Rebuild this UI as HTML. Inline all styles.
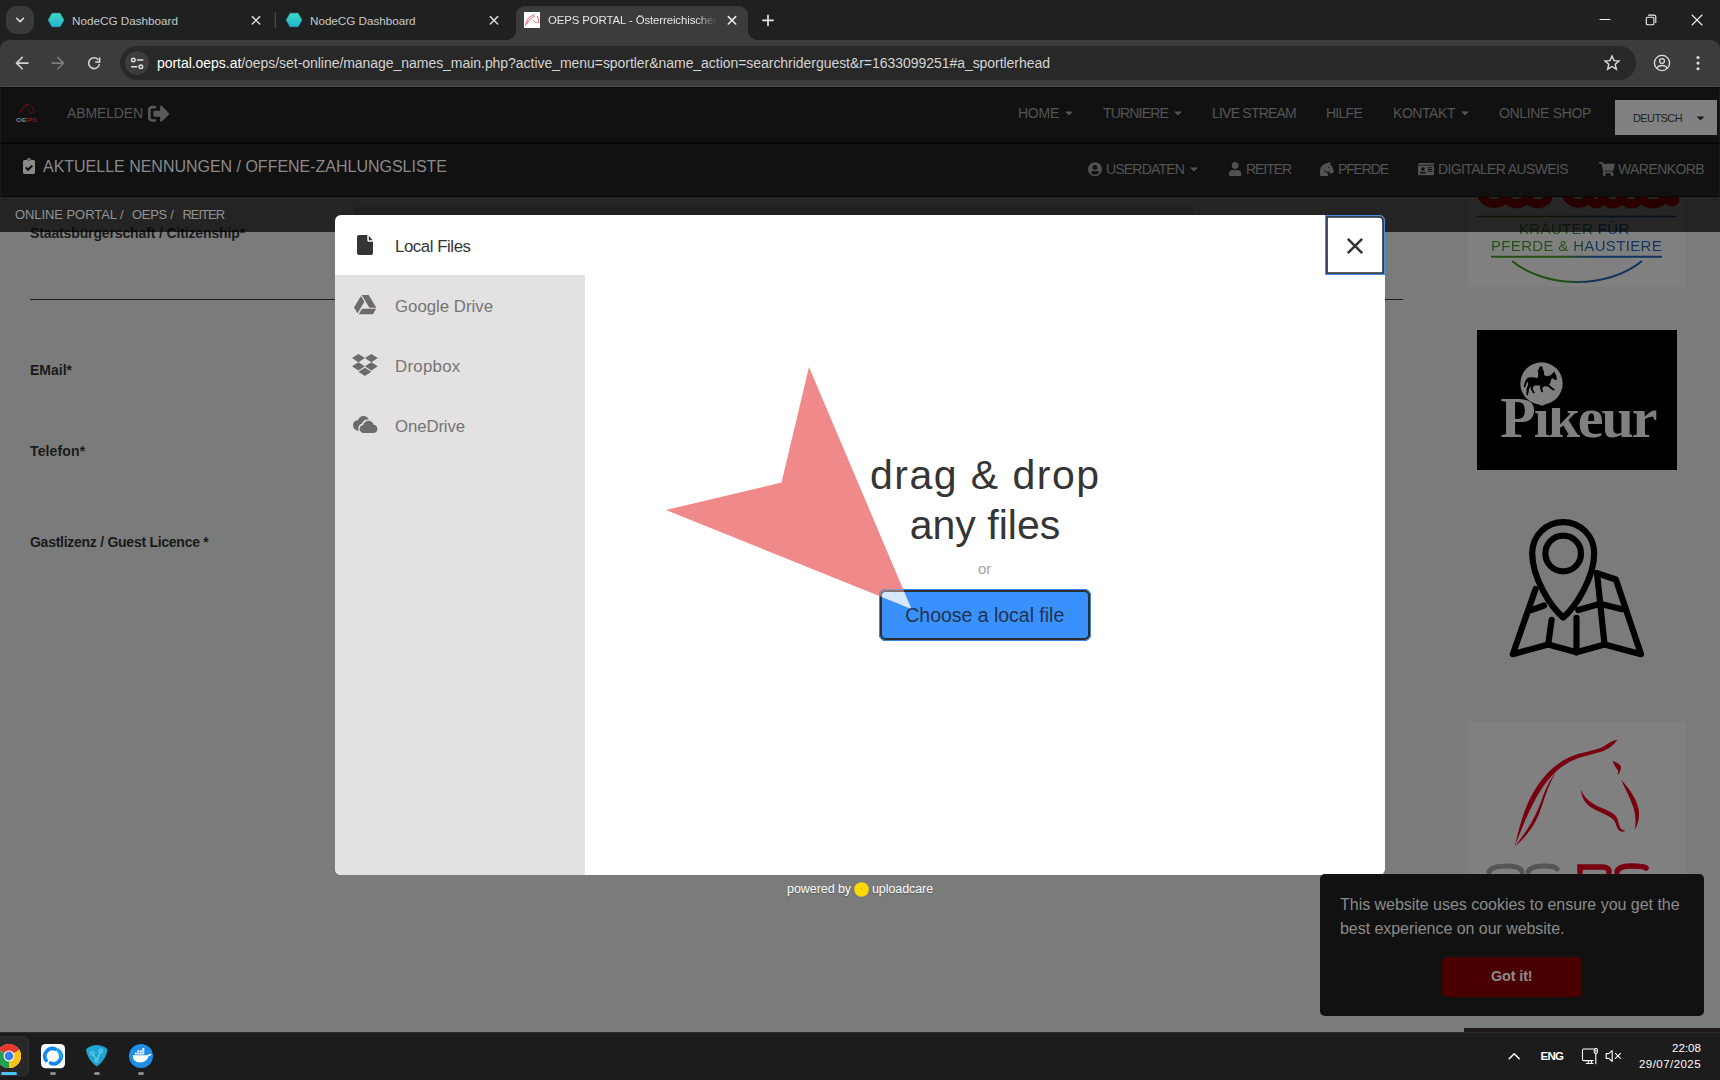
<!DOCTYPE html>
<html lang="de">
<head>
<meta charset="utf-8">
<title>OEPS PORTAL - Österreichischer Pferdesportverband</title>
<style>
*{box-sizing:border-box;margin:0;padding:0}
html,body{width:1720px;height:1080px;overflow:hidden}
body{position:relative;background:#7a7c7b;font-family:"Liberation Sans",sans-serif}
.a{position:absolute}
.t{position:absolute;white-space:nowrap;z-index:5}
svg{position:absolute;overflow:visible}
/* chrome */
#tabstrip{left:0;top:0;width:1720px;height:87px;background:#1f2020;z-index:2}
#toolbar{left:0;top:40px;width:1720px;height:47px;background:#3c3c3c;border-radius:9px 9px 0 0;border-bottom:1px solid #4c4c4c;z-index:2}
#acttab{left:516px;top:6px;width:232px;height:34px;background:#3c3c3c;border-radius:9px 9px 0 0;z-index:3}
#acttab:before,#acttab:after{content:"";position:absolute;bottom:0;width:9px;height:9px}
#acttab:before{left:-9px;background:radial-gradient(circle at 0 0,transparent 8.5px,#3c3c3c 9px)}
#acttab:after{right:-9px;background:radial-gradient(circle at 100% 0,transparent 8.5px,#3c3c3c 9px)}
#tabsearch{left:6px;top:6px;width:28px;height:28px;border-radius:10px;background:#3a3a3a;z-index:3}
#omni{left:120px;top:46px;width:1516px;height:34px;border-radius:17px;background:#282828;z-index:3}
#siteinfo{left:125px;top:51px;width:24px;height:24px;border-radius:12px;background:#3c3c3c;z-index:4}
/* page */
#nav1{left:0;top:87px;width:1720px;height:57px;background:#111;border:1px solid #070707;border-left-color:#1b1b1b;border-right-color:#1b1b1b;border-bottom-width:2px;z-index:2}
#nav2{left:0;top:144px;width:1720px;height:53px;background:#111;border:1px solid #070707;border-left-color:#1b1b1b;border-right-color:#1b1b1b;border-top:0;z-index:2}
#crumb{left:0;top:197px;width:1720px;height:35px;background:rgba(0,0,0,.705);z-index:4}
#crumbin{left:353px;top:207px;width:840px;height:12px;background:#1f1f1f;border-radius:4px 4px 0 0;z-index:4}
#lang{left:1615px;top:100px;width:102px;height:35px;background:#818181;z-index:3}
#hr{left:30px;top:299px;width:1373px;height:1px;background:#1c1c1c}
/* modal */
#modal{left:335px;top:215px;width:1050px;height:660px;background:#fff;border-radius:6px;z-index:20;overflow:hidden}
#side{left:0;top:60px;width:250px;height:600px;background:#e3e1e1}
#close{left:990px;top:0;width:60px;height:60px;border-radius:0 6px 0 0;box-shadow:inset 0 0 0 1.200px #4a8fe6,inset 0 0 0 2.800px #2b2b2b}
#btn{left:879px;top:589px;width:212px;height:52px;border-radius:7px;background:#3a90fc;box-shadow:inset 0 0 0 1px #3a86e8,inset 0 0 0 3px #2d2d2d;z-index:31}
/* cookie */
#cookie{left:1320px;top:874px;width:384px;height:142px;border-radius:5px;background:#111;z-index:38}
#gotit{left:1442px;top:957px;width:140px;height:40px;border-radius:5px;background:#4b0000;z-index:39}
/* taskbar */
#taskbar{left:0;top:1032px;width:1720px;height:48px;background:#1c1c1c;border-top:1px solid #2b2b2b;z-index:50}
</style>
</head>
<body>
<!-- ============ browser chrome ============ -->
<div class="a" id="tabstrip"></div>
<div class="a" id="toolbar"></div>
<div class="a" id="acttab"></div>
<div class="a" id="tabsearch"></div>
<div class="a" id="omni"></div>
<div class="a" id="siteinfo"></div>
<svg id="chromeicons" style="left:0;top:0;z-index:6" width="1720" height="90" viewBox="0 0 1720 90" fill="none" stroke-linecap="round" stroke-linejoin="round">
  <defs>
    <linearGradient id="hexg" x1="0" y1="0" x2="0" y2="1"><stop offset="0" stop-color="#40d8c2"/><stop offset="1" stop-color="#22b4d2"/></linearGradient>
  </defs>
  <!-- tab search chevron -->
  <path d="M16.700 18.300l3.400 3.400 3.400-3.400" stroke="#e3e3e3" stroke-width="1.6"/>
  <!-- hex favicons -->
  <path d="M48.2 20l3.9-6.8h8l3.9 6.8-3.9 6.8h-8z" fill="url(#hexg)" stroke="url(#hexg)" stroke-width=".4"/>
  <path d="M286.2 20l3.9-6.8h8l3.9 6.8-3.9 6.8h-8z" fill="url(#hexg)" stroke="url(#hexg)" stroke-width=".4"/>
  <!-- tab close x -->
  <g stroke="#d6d6d6" stroke-width="1.5">
    <path d="M252.3 16.6l7.4 7.4M259.7 16.6l-7.4 7.4"/>
    <path d="M490.3 16.6l7.4 7.4M497.7 16.6l-7.4 7.4"/>
    <path d="M728.3 16.6l7.4 7.4M735.7 16.6l-7.4 7.4" stroke="#ededed"/>
  </g>
  <path d="M275.3 12.5v15" stroke="#4d4d4d" stroke-width="1.2"/>
  <!-- favicon 3 -->
  <rect x="524" y="12" width="16" height="16" fill="#fff" stroke="none"/>
  <path d="M525.5 25.5c.8-5.5 3.6-9.6 9-10.8M527 24c1.5-4 4-6.5 7.5-7.5M537.5 16.5c.8 2 1.3 4 1.2 6.3M533.5 20.5c1 1.6 2.4 2.3 3.6 2.2" stroke="#e9626a" stroke-width="1"/>
  <!-- new tab + -->
  <path d="M763 20.3h10M768 15.3v10" stroke="#e6e6e6" stroke-width="1.7"/>
  <!-- window controls -->
  <path d="M1600 19.5h10" stroke="#f0f0f0" stroke-width="1.1"/>
  <rect x="1646.3" y="17.2" width="7.6" height="7.6" rx="1.3" stroke="#f0f0f0" stroke-width="1.1"/>
  <path d="M1648.5 15.100h5.300a2 2 0 0 1 2 2v5.300" stroke="#f0f0f0" stroke-width="1.1"/>
  <path d="M1692 15l10 10M1702 15l-10 10" stroke="#f0f0f0" stroke-width="1.1"/>
  <!-- back / forward / reload -->
  <path d="M28 63.100H17M22.200 57.400l-5.700 5.700 5.700 5.700" stroke="#d2d2d2" stroke-width="1.6"/>
  <path d="M52.200 63.100H63M57.800 57.400l5.700 5.700-5.700 5.700" stroke="#7c7c7c" stroke-width="1.6"/>
  <path d="M98 59.500A5.400 5.400 0 1 0 99.300 64.600" stroke="#d2d2d2" stroke-width="1.6"/>
  <path d="M99.600 57.400v4.700h-4.400" stroke="#dedede" stroke-width="1.5" stroke-linecap="butt" stroke-linejoin="miter"/>
  <!-- site info (tune) -->
  <g stroke="#e0e0e0" stroke-width="1.4">
    <circle cx="133.3" cy="60" r="1.8"/><path d="M137.5 60h5.3"/>
    <circle cx="140.9" cy="66.8" r="1.8"/><path d="M131.5 66.8h5.3"/>
  </g>
  <!-- star -->
  <path d="M1612 56l2 4.6 5 .4-3.8 3.3 1.2 4.9-4.4-2.7-4.4 2.7 1.2-4.9-3.8-3.3 5-.4z" stroke="#dcdcdc" stroke-width="1.4" stroke-linejoin="miter"/>
  <!-- profile -->
  <circle cx="1662" cy="63" r="7.6" stroke="#dcdcdc" stroke-width="1.4"/>
  <circle cx="1662" cy="61" r="2.4" stroke="#dcdcdc" stroke-width="1.3"/>
  <path d="M1656.7 68.3c1.2-2 3-2.8 5.3-2.8s4.1.8 5.3 2.8" stroke="#dcdcdc" stroke-width="1.3"/>
  <!-- kebab -->
  <g fill="#dcdcdc" stroke="none"><circle cx="1698" cy="57.5" r="1.55"/><circle cx="1698" cy="63.1" r="1.55"/><circle cx="1698" cy="68.7" r="1.55"/></g>
</svg>

<!-- ============ page (dimmed behind dialog overlay) ============ -->
<div class="a" id="nav1"></div>
<div class="a" id="nav2"></div>
<div class="a" id="lang"></div>
<div class="a" id="hr"></div>
<!-- page header icons -->
<svg style="left:16px;top:102px;z-index:5" width="22" height="22" viewBox="0 0 22 22" fill="none" stroke-linecap="round">
  <path d="M3.6 11.6c.8-5.200 4-8.600 9.800-10M5.600 9.600c1.400-3.200 3.600-5.400 7-6.600M15.400 3.400c1.600 2.400 2.600 5 2.600 8M11 7.600c1 2 2.800 3.200 5 3.400" stroke="#5c1014" stroke-width="1"/>
  <text x="0" y="20.300" font-family="'Liberation Sans',sans-serif" font-size="5.600" font-weight="700" fill="#7e7e7e" stroke="none" textLength="21" lengthAdjust="spacingAndGlyphs">OE<tspan fill="#7a1c20">PS</tspan></text>
</svg>
<svg style="left:148px;top:102.500px;z-index:5" width="21.500" height="21.500" viewBox="0 0 512 512"><path fill="#595959" d="M497 273L329 441c-15 15-41 4.500-41-17v-96H152c-13.300 0-24-10.700-24-24v-96c0-13.300 10.700-24 24-24h136V88c0-21.400 25.900-32 41-17l168 168c9.300 9.400 9.300 24.600 0 34zM192 436v-40c0-6.600-5.400-12-12-12H96c-17.700 0-32-14.300-32-32V160c0-17.700 14.300-32 32-32h84c6.600 0 12-5.400 12-12V76c0-6.600-5.400-12-12-12H96c-53 0-96 43-96 96v192c0 53 43 96 96 96h84c6.600 0 12-5.400 12-12z"/></svg>
<svg style="left:23px;top:158px;z-index:5" width="12" height="16" viewBox="0 0 384 512"><path fill="#8a8a8a" d="M336 64h-80c0-35.300-28.700-64-64-64s-64 28.700-64 64H48C21.500 64 0 85.500 0 112v352c0 26.500 21.500 48 48 48h288c26.500 0 48-21.500 48-48V112c0-26.500-21.500-48-48-48zM192 40c13.300 0 24 10.700 24 24s-10.700 24-24 24-24-10.700-24-24 10.700-24 24-24zm121.200 231.800l-143 141.800c-4.700 4.700-12.300 4.600-17-.1l-82.600-83.300c-4.700-4.700-4.600-12.300.1-17L99.100 285c4.700-4.700 12.300-4.600 17 .1l46 46.400 106-105.200c4.700-4.700 12.300-4.600 17 .1l28.200 28.400c4.700 4.800 4.600 12.300-.1 17z"/></svg>
<!-- carets -->
<svg style="left:0;top:0;z-index:5" width="1720" height="200" viewBox="0 0 1720 200">
  <g fill="#545454">
    <path d="M1065 111.500h8l-4 4z"/>
    <path d="M1174 111.500h8l-4 4z"/>
    <path d="M1461 111.500h8l-4 4z"/>
    <path d="M1190 167.500h8l-4 4z"/>
  </g>
  <path d="M1696.500 116.500h8l-4 4z" fill="#1a1a1a"/>
</svg>
<!-- user-circle -->
<svg style="left:1088px;top:161.700px;z-index:5" width="14" height="14.400" viewBox="0 0 496 512"><path fill="#525252" d="M248 8C111 8 0 119 0 256s111 248 248 248 248-111 248-248S385 8 248 8zm0 96c48.600 0 88 39.400 88 88s-39.400 88-88 88-88-39.400-88-88 39.400-88 88-88zm0 344c-58.700 0-111.300-26.600-146.500-68.200 18.800-35.400 55.600-59.800 98.500-59.800 2.400 0 4.800.4 7.100 1.100 13 4.200 26.600 6.900 40.900 6.900 14.300 0 28-2.700 40.900-6.900 2.300-.7 4.700-1.100 7.100-1.100 42.900 0 79.700 24.400 98.500 59.800C359.300 421.400 306.700 448 248 448z"/></svg>
<!-- user -->
<svg style="left:1228.700px;top:162px;z-index:5" width="12.300" height="14" viewBox="0 0 448 512"><path fill="#525252" d="M224 256c70.700 0 128-57.300 128-128S294.700 0 224 0 96 57.300 96 128s57.300 128 128 128zm89.600 32h-16.700c-22.200 10.200-46.900 16-72.900 16s-50.600-5.800-72.900-16h-16.700C60.200 288 0 348.200 0 422.400V464c0 26.500 21.500 48 48 48h352c26.500 0 48-21.500 48-48v-41.600c0-74.200-60.200-134.400-134.400-134.400z"/></svg>
<!-- horse head -->
<svg style="left:1320px;top:162px;z-index:5" width="14" height="14" viewBox="0 0 512 512"><path fill="#525252" d="M509.800 332.500l-69.900-164.300c-14.900-41.200-50.400-71-93-79.200 18-10.600 46.300-35.900 34.200-82.300-1.300-5-7.100-7.900-12-6.100L166.900 76.300C35.900 123.400 0 238.900 0 398.800V480c0 17.700 14.300 32 32 32h236.200c23.800 0 39.300-25 28.600-46.300L256 384v-.7c-45.600-3.500-84.600-30.700-104.300-69.600-1.600-3.100-.9-6.900 1.600-9.300l12.100-12.100c3.900-3.900 10.600-2.700 12.900 2.400 14.800 33.700 48.200 57.400 87.400 57.400 17.200 0 33-5.100 46.800-13.200l46 63.900c6 8.400 15.700 13.300 26 13.300h50.300c8.500 0 16.600-3.400 22.600-9.400l45.300-39.800c8.900-9.100 11.700-22.600 7.100-34.400zM328 224c-13.300 0-24-10.700-24-24s10.700-24 24-24 24 10.700 24 24-10.700 24-24 24z"/></svg>
<!-- id card -->
<svg style="left:1418px;top:161.500px;z-index:5" width="16" height="14.200" viewBox="0 0 576 512"><path fill="#525252" d="M528 32H48C21.500 32 0 53.500 0 80v16h576V80c0-26.500-21.500-48-48-48zM0 432c0 26.500 21.500 48 48 48h480c26.500 0 48-21.500 48-48V128H0v304zm352-232c0-4.400 3.600-8 8-8h144c4.400 0 8 3.600 8 8v16c0 4.400-3.600 8-8 8H360c-4.400 0-8-3.600-8-8v-16zm0 64c0-4.400 3.600-8 8-8h144c4.400 0 8 3.600 8 8v16c0 4.400-3.600 8-8 8H360c-4.400 0-8-3.600-8-8v-16zm0 64c0-4.400 3.600-8 8-8h144c4.400 0 8 3.600 8 8v16c0 4.400-3.600 8-8 8H360c-4.400 0-8-3.600-8-8v-16zM176 192c35.300 0 64 28.700 64 64s-28.700 64-64 64-64-28.700-64-64 28.700-64 64-64zM67.100 396.200C75.500 370.500 99.600 352 128 352h8.200c12.300 5.100 25.700 8 39.800 8s27.600-2.900 39.800-8h8.200c28.400 0 52.500 18.500 60.900 44.200 3.200 9.900-5.200 19.800-15.600 19.800H82.700c-10.400 0-18.800-10-15.600-19.800z"/></svg>
<!-- cart -->
<svg style="left:1599px;top:162px;z-index:5" width="15.700" height="14" viewBox="0 0 576 512"><path fill="#525252" d="M528.100 301.300l47.300-208C578.800 78.300 567.400 64 552 64H159.200l-9.200-44.800C147.800 8 137.900 0 126.500 0H24C10.700 0 0 10.700 0 24v16c0 13.300 10.700 24 24 24h69.900l70.200 343.400C147.300 417.100 136 435.200 136 456c0 30.900 25.100 56 56 56s56-25.100 56-56c0-15.700-6.400-29.800-16.800-40h209.600C430.400 426.200 424 440.300 424 456c0 30.900 25.100 56 56 56s56-25.100 56-56c0-22.200-12.900-41.300-31.600-50.400l5.500-24.300c3.400-15-8-29.300-23.400-29.300H218.100l-6.500-32h293.100c11.200 0 20.900-7.800 23.400-18.700z"/></svg>

<!-- right column sponsor tiles (dimmed) -->
<div class="a" style="left:1449px;top:314px;width:256px;height:1px;background:#7f8180"></div>
<div class="a" style="left:1449px;top:497px;width:256px;height:1px;background:#7f8180"></div>
<div class="a" style="left:1449px;top:690px;width:256px;height:1px;background:#7f8180"></div>
<div class="a" style="left:1468px;top:196px;width:217px;height:91px;background:#808080"></div>
<svg style="left:0;top:0;z-index:1" width="1720" height="1080" viewBox="0 0 1720 1080" fill="none">
  <defs>
    <linearGradient id="gb" gradientUnits="userSpaceOnUse" x1="1491" x2="1662" y1="0" y2="0"><stop offset="0" stop-color="#235012"/><stop offset=".42" stop-color="#235012"/><stop offset=".6" stop-color="#10345e"/><stop offset="1" stop-color="#10345e"/></linearGradient>
  </defs>
  <!-- curatia script (only the lower loops are visible below the header) -->
  <g stroke="#8a0000" stroke-width="9" stroke-linecap="round" stroke-linejoin="round">
    <path d="M1481 191C1481 207 1506 207 1506 194C1506 207 1527 207 1527 194C1527 207 1548.5 207 1548.5 194"/>
    <path d="M1566 191C1566 207 1589 207 1589 194C1589 207 1603 207 1603 194C1603 207 1622 207 1622 194C1622 207 1641 207 1641 194C1641 207 1665 207 1665 194Q1670 206 1675 200"/>
  </g>
  <path d="M1477 216.500h199" stroke="url(#gb)" stroke-width="1.600"/>
  <path d="M1491 256.800h171" stroke="url(#gb)" stroke-width="1.900"/>
  <path d="M1512 261c34 28 96 28 130 0" stroke="url(#gb)" stroke-width="2"/>
  <!-- pikeur -->
  <rect x="1477" y="330" width="200" height="140" fill="#000"/>
  <!-- map icon -->
  <g stroke="#000" stroke-width="6.200" stroke-linecap="round" stroke-linejoin="round">
    <path d="M1563.200 617.500c-12-10-31-39-31-64.400a31 31 0 0 1 62 0c0 25.400-19 54.400-31 64.400z"/>
    <circle cx="1563.200" cy="553.500" r="17.800"/>
    <path d="M1535.600 589l-22.800 65.200 35.400-9.800 28.300 7.900 28-7.900 36.500 9.800-25.100-74.700-18.900-6.300"/>
    <path d="M1548.200 644.400l3.400-24.500M1576.500 652.300v-34.500M1604.500 644.400l-7.500-71.200"/>
    <path d="M1531.300 610.100l12.700-4.600M1578.300 610.100l21.800-6.300 22 5.500"/>
  </g>
  <!-- oeps horse -->
  <rect x="1468.500" y="722" width="216.500" height="200" fill="#808080"/>
  <g fill="#780010">
    <path d="M1617.500 739.800c-6.500 1-11.500 5.500-17 8.300-8 3.200-20 4.200-31 9.200-25 11-40 38-47 60-3.500 10.500-5.500 20-7.800 29 4.500-11 9.300-24 14.300-34 9-19 20-39 40-50 11-6 23-7.500 32-10.500 7.500-2.500 13-7 16.500-12z"/>
    <path d="M1556 772.500c-7 8-11 18-14.500 28-4 11-9 21-15 30-4 6-8 11-11.500 16 8-7 15-15 20-24 6-11 8.500-23 13-34 2-5.500 5-11 8-16z"/>
    <path d="M1612.600 760.500c1 4 3 7 5.500 10l-.3 4.500c2-2.500 3.500-5.500 3-8.500-1-3-5-4-8.200-6z"/>
    <path d="M1621 779.500c4 9 9 18 12 27 2.500 7.500 3.500 15.500 1.500 23.500 4-6 5.500-14 4-21.500-2.500-11-10-20.500-17.500-29z"/>
    <path d="M1581.200 790c0 7 4 13.500 10 17.500 7 4.500 16 6.500 22 12 3 3 3 8 6 11 2 1.500 4.500 1.500 6.500 0-3 0-5-1.500-6-4-1.500-4-1.500-8.500-5-11.500-6.500-5.500-15.500-7-22.500-12-5-3-9-7.500-11-13z"/>
  </g>
  <g stroke-linecap="round" stroke-width="5" fill="none">
    <path d="M1489 872c2-5 10-6 18-6s14 1 15 6M1528 872c2-5 9-6 16-6s12 1 13 3" stroke="#555"/>
    <path d="M1580 872v-5h22c5 0 7 2 7 5M1617 872c1-5 8-6 14-6s13 0 15 2" stroke="#780010" stroke-width="5.500"/>
  </g>
  <!-- photo strip at very bottom -->
  <rect x="1464" y="1028" width="256" height="4" fill="#1d1716"/>
</svg>
<div class="a" style="left:1549px;top:392px;width:20px;height:15.500px;background:#000;z-index:6"></div>
<svg style="left:1519.700px;top:362px;z-index:7" width="43" height="43" viewBox="0 0 43 43"><circle cx="21.500" cy="21.500" r="21.200" fill="#808080"/>
  <path fill="#000" d="M21.300 4.300c.9 0 1.500.7 1.400 1.600l-.2 1.300c.9.500 1.300 1.500 1.400 2.600l.3 3.200 2.200 1.200 3.800-.6 3.700-3.500c.4-.4.900-.3 1 .2l.3 1.500c.7.800 1.200 1.700 1.300 2.800l.3 2.400c0 .6-.5 1.100-1.100 1l-1.600-.4-1.100-1.300-1.700.6-.9 3.700c-.2.900-.7 1.700-1.400 2.200l5.600 4.700c.5.400.2 1.100-.4 1l-1.300-.2-5.700-4-2.500-.1-2.600 1.900.9 3.400c.1.500-.2.900-.7.800l-.9-.2-1.500-4.100.6-2.300-4.900-.4-2.600 1.700-.1 2.600 1.800 2.900c.3.500-.1 1-.6.800l-1.100-.4-2.300-3.800.1-2.800-1.700 2.400-1.100 6.200c-.1.500-.6.700-1 .4l-.6-.4.300-6.600 1.500-3.800-.2-3.100-1.200 1.300-1.600 4.400c-.2.600-.9.600-1.100.1l-.3-.9 1.300-4.700c.6-1.900 1.900-3.400 3.700-4 1.700-.6 3.500-.5 5.200 0l3.700.5.600-4.500-.5-2.300c-.2-.8.200-1.500.9-1.900l.4-1.500c.2-.8.900-1.300 1.600-1.300z"/>
</svg>

<div class="a" id="crumb"></div>
<div class="a" id="crumbin"></div>

<!-- ============ uploadcare dialog ============ -->
<div class="a" id="modal">
  <div class="a" id="side"></div>
  <div class="a" id="close"></div>
</div>
<!-- source tab icons -->
<svg style="left:357px;top:235px;z-index:30" width="16" height="20" viewBox="0 0 16 20"><path fill="#353535" d="M2 0h8.300v5.300a1.500 1.500 0 0 0 1.500 1.500H16V18a2 2 0 0 1-2 2H2a2 2 0 0 1-2-2V2a2 2 0 0 1 2-2zM11.800.700L15.700 5.300h-3.900z"/></svg>
<svg style="left:353.800px;top:294.800px;z-index:30" width="22.400" height="19.200" viewBox="0 0 22.400 19.200"><g fill="#6b6b6b"><path d="M7.700 0h7l7.700 12.800h-7z"/><path d="M6.900.9l3.500 5.800L3.500 18.300 0 12.500z"/><path d="M8 13.800h14.200l-3.300 5.400H4.700z"/></g></svg>
<svg style="left:352.200px;top:353.500px;z-index:30" width="25.800" height="22" viewBox="0 0 25.800 22"><g fill="#6b6b6b"><path d="M6.450 0l6.450 4.100-6.450 4.100L0 4.100z"/><path d="M19.350 0l6.450 4.100-6.450 4.100-6.450-4.100z"/><path d="M6.450 8.200l6.450 4.100-6.450 4.100L0 12.300z"/><path d="M19.350 8.200l6.450 4.100-6.450 4.100-6.450-4.100z"/><path d="M12.900 13.700l6.450 4.100L12.900 22l-6.450-4.200z"/></g></svg>
<svg style="left:352.800px;top:416px;z-index:30" width="24.400" height="17" viewBox="0 0 24.400 17"><g fill="#6b6b6b"><path d="M5.300 12.200c0-2.300 1.500-4.100 3.600-4.500.6-2.600 2.800-4.300 5.400-4.300.5 0 1 .1 1.400.2C14.900 1.400 12.900 0 10.500 0 8 0 5.900 1.600 5.200 3.900 2.300 4 0 6.400 0 9.300c0 2.800 2.100 5.100 4.900 5.400h.9c-.3-.8-.5-1.600-.5-2.500z"/><path d="M10.600 17c-2.200 0-4-1.800-4-4 0-2.100 1.600-3.800 3.600-4 .5-2.500 2.700-4.300 5.300-4.300 2.500 0 4.700 1.700 5.200 4.100 2.100.2 3.700 2 3.700 4.100 0 2.300-1.800 4.100-4.100 4.100z"/></g></svg>
<!-- close X -->
<svg style="left:1347px;top:238px;z-index:30" width="16" height="16" viewBox="0 0 16 16"><path d="M.8.800l14.400 14.400M15.200.8L.8 15.200" stroke="#353535" stroke-width="2.600" stroke-linecap="butt"/></svg>
<!-- uploadcare dot -->
<svg style="left:854.400px;top:882.100px;z-index:30" width="15" height="15" viewBox="0 0 15 15"><circle cx="7.500" cy="7.500" r="7.300" fill="#ffd800"/><path d="M6.800 7h1.200" stroke="#b89400" stroke-width=".7"/></svg>
<!-- annotation arrow (under button) -->
<svg style="left:0;top:0;z-index:30" width="1720" height="1080" viewBox="0 0 1720 1080"><path d="M809 367L911.500 609 666 510l115.500-27.500z" fill="#f08a8a"/></svg>

<div class="a" id="btn"></div>
<!-- arrow tip where it overlaps the button -->
<svg style="left:879px;top:589px;z-index:33" width="212" height="52" viewBox="879 589 212 52"><defs><clipPath id="btnclip"><rect x="879" y="589" width="212" height="52" rx="7"/></clipPath><clipPath id="btnin"><rect x="882" y="592" width="206" height="46" rx="4"/></clipPath></defs><g clip-path="url(#btnclip)"><path d="M809 367L911.500 609 666 510l115.500-27.500z" fill="#d9a6aa" opacity=".55"/></g><g clip-path="url(#btnin)"><path d="M809 367L911.500 609 666 510l115.500-27.500z" fill="#d6e8fd"/></g></svg>


<!-- ============ cookie consent ============ -->
<div class="a" id="cookie"></div>
<div class="a" id="gotit"></div>

<!-- ============ windows taskbar ============ -->
<div class="a" id="taskbar"></div>
<!-- taskbar app icons -->
<div class="a" style="left:-6px;top:1036px;width:35px;height:40px;border-radius:5px;background:#282828;border:1px solid #303030;z-index:51"></div>
<svg style="left:0;top:1032px;z-index:52" width="1720" height="48" viewBox="0 1032 1720 48">
  <!-- chrome -->
  <g>
    <circle cx="9" cy="1056" r="12" fill="#fff"/>
    <path d="M9 1056L-1.390 1050A12 12 0 0 1 19.390 1050z" fill="#e33b2e"/>
    <path d="M9 1056L19.390 1050A12 12 0 0 1 9 1068z" fill="#fbc116"/>
    <path d="M9 1056L9 1068A12 12 0 0 1 -1.390 1050z" fill="#22a04b"/>
    <path d="M-1.390 1050A12 12 0 0 1 19.390 1050L9 1050z" fill="#e33b2e"/>
    <path d="M19.390 1050A12 12 0 0 1 9 1068L14.200 1059z" fill="#fbc116"/>
    <path d="M9 1068A12 12 0 0 1 -1.390 1050L3.800 1059z" fill="#22a04b"/>
    <circle cx="9" cy="1056" r="5.500" fill="#fff"/>
    <circle cx="9" cy="1056" r="4.400" fill="#3b7ded"/>
  </g>
  <rect x="1" y="1072" width="16" height="3" rx="1.500" fill="#4cc2ff"/>
  <!-- app 2: white tile with blue ring -->
  <rect x="41" y="1044" width="24" height="24.300" rx="4.500" fill="#fbfbfb"/>
  <g fill="none" stroke-linecap="round" stroke-width="3.600">
    <path d="M46.200 1060.500a7.600 7.600 0 0 1 9.300-11.300" stroke="#0f86f2"/>
    <path d="M59.800 1051.700a7.600 7.600 0 0 1-9.300 11.300" stroke="#0f86f2"/>
    <path d="M58.200 1050.200a7.600 7.600 0 0 1 2.300 6" stroke="#22a7e6"/>
  </g>
  <rect x="50" y="1072" width="6" height="3" rx="1.500" fill="#8a8a8a"/>
  <!-- app 3: shield -->
  <path d="M86 1049.300c7-5.600 14.500-5.600 21.500 0-1 7.300-4.700 13-10.750 17.300C90.700 1062.300 87 1056.600 86 1049.300z" fill="#1fa5d3"/>
  <g fill="none" stroke="#8fd6ee" stroke-width="1">
    <circle cx="92.300" cy="1053.300" r="1.700"/><circle cx="100.800" cy="1050.800" r="1.700"/><circle cx="96.700" cy="1060.500" r="1.400"/>
    <path d="M93.300 1054.800l3 4.400M100.200 1052.400l-3 6.800"/>
  </g>
  <rect x="94" y="1072" width="6" height="3" rx="1.500" fill="#8a8a8a"/>
  <!-- app 4: docker -->
  <circle cx="141" cy="1056" r="12" fill="#1d8fe8"/>
  <path d="M132.700 1055.300h13.600c1.300 0 2.300-.5 3-1.500.6.300 1.500.3 2.300-.1-.5 1.500-1.500 2.200-2.900 2.300-1.300 4.100-4.300 6.400-8.800 6.400-4.600 0-7-2.500-7.200-7.100z" fill="#fff"/>
  <g fill="#fff"><rect x="134.800" y="1052.600" width="2" height="1.900"/><rect x="137.300" y="1052.600" width="2" height="1.900"/><rect x="139.800" y="1052.600" width="2" height="1.900"/><rect x="142.300" y="1052.600" width="2" height="1.900"/><rect x="137.300" y="1050.300" width="2" height="1.900"/><rect x="139.800" y="1050.300" width="2" height="1.900"/><rect x="142.300" y="1050.300" width="2" height="1.900"/><rect x="142.300" y="1048" width="2" height="1.900"/></g>
  <rect x="138" y="1072" width="6" height="3" rx="1.500" fill="#8a8a8a"/>
  <!-- tray -->
  <path d="M1509.200 1058.800l5-5 5 5" fill="none" stroke="#fff" stroke-width="1.500" stroke-linecap="round" stroke-linejoin="round"/>
  <g fill="none" stroke="#fff" stroke-width="1.100" stroke-linejoin="round" stroke-linecap="round">
    <path d="M1593.500 1049h-9.800a1.200 1.200 0 0 0-1.200 1.200v9.200a1.200 1.200 0 0 0 1.200 1.200h9.500"/>
    <path d="M1586.300 1063.500h6.800M1588.300 1060.800v2.500M1591.300 1060.800v2.500"/>
    <rect x="1594.300" y="1048.600" width="3" height="4.600" rx="1"/>
    <path d="M1595.800 1053.300v10.500M1595.800 1050.200v1"/>
    <path d="M1606.200 1053.600h2.600l3.400-3v10.800l-3.400-3h-2.600z"/>
    <path d="M1615.400 1053.400l5 5M1620.400 1053.400l-5 5"/>
  </g>
</svg>


<!-- ============ all text ============ -->
<span class="t" style="left:72.0px;top:13.93px;font:400 11.7px/1.2 'Liberation Sans', sans-serif;letter-spacing:0.006px;color:#c9c9c9;">NodeCG Dashboard</span>
<span class="t" style="left:310.0px;top:13.93px;font:400 11.7px/1.2 'Liberation Sans', sans-serif;letter-spacing:-0.025px;color:#c9c9c9;">NodeCG Dashboard</span>
<span class="t" style="left:548.0px;top:14.21px;font:400 11.4px/1.2 'Liberation Sans', sans-serif;letter-spacing:-0.099px;color:#e6e6e6;width:169px;overflow:hidden;-webkit-mask-image:linear-gradient(90deg,#000 0,#000 148px,transparent 169px);mask-image:linear-gradient(90deg,#000 0,#000 148px,transparent 169px);">OEPS PORTAL - Österreichischer</span>
<span class="t" style="left:67.0px;top:104.75px;font:400 14px/1.2 'Liberation Sans', sans-serif;letter-spacing:-0.129px;color:#555;">ABMELDEN</span>
<span class="t" style="left:43.0px;top:156.86px;font:400 16px/1.2 'Liberation Sans', sans-serif;letter-spacing:-0.013px;color:#8a8a8a;">AKTUELLE NENNUNGEN / OFFENE-ZAHLUNGSLISTE</span>
<span class="t" style="left:1018.0px;top:104.75px;font:400 14px/1.2 'Liberation Sans', sans-serif;letter-spacing:-0.250px;color:#545454;">HOME</span>
<span class="t" style="left:1103.0px;top:104.75px;font:400 14px/1.2 'Liberation Sans', sans-serif;letter-spacing:-0.820px;color:#545454;">TURNIERE</span>
<span class="t" style="left:1212.0px;top:104.75px;font:400 14px/1.2 'Liberation Sans', sans-serif;letter-spacing:-0.781px;color:#545454;">LIVE STREAM</span>
<span class="t" style="left:1326.0px;top:104.75px;font:400 14px/1.2 'Liberation Sans', sans-serif;letter-spacing:-0.738px;color:#545454;">HILFE</span>
<span class="t" style="left:1393.0px;top:104.75px;font:400 14px/1.2 'Liberation Sans', sans-serif;letter-spacing:-0.440px;color:#545454;">KONTAKT</span>
<span class="t" style="left:1499.0px;top:104.75px;font:400 14px/1.2 'Liberation Sans', sans-serif;letter-spacing:-0.337px;color:#545454;">ONLINE SHOP</span>
<span class="t" style="left:1633.0px;top:111.59px;font:400 11px/1.2 'Liberation Sans', sans-serif;letter-spacing:-0.596px;color:#1f1f1f;">DEUTSCH</span>
<span class="t" style="left:1106.0px;top:160.75px;font:400 14px/1.2 'Liberation Sans', sans-serif;letter-spacing:-0.812px;color:#545454;">USERDATEN</span>
<span class="t" style="left:1246.0px;top:160.75px;font:400 14px/1.2 'Liberation Sans', sans-serif;letter-spacing:-1.057px;color:#545454;">REITER</span>
<span class="t" style="left:1338.0px;top:160.75px;font:400 14px/1.2 'Liberation Sans', sans-serif;letter-spacing:-1.133px;color:#545454;">PFERDE</span>
<span class="t" style="left:1438.0px;top:160.75px;font:400 14px/1.2 'Liberation Sans', sans-serif;letter-spacing:-0.620px;color:#545454;">DIGITALER AUSWEIS</span>
<span class="t" style="left:1618.0px;top:160.75px;font:400 14px/1.2 'Liberation Sans', sans-serif;letter-spacing:-0.587px;color:#545454;">WARENKORB</span>
<span class="t" style="left:15.0px;top:206.70px;font:400 13px/1.2 'Liberation Sans', sans-serif;letter-spacing:-0.072px;color:#939393;">ONLINE PORTAL /</span>
<span class="t" style="left:132.0px;top:206.70px;font:400 13px/1.2 'Liberation Sans', sans-serif;letter-spacing:-0.310px;color:#939393;">OEPS /</span>
<span class="t" style="left:182.5px;top:206.70px;font:400 13px/1.2 'Liberation Sans', sans-serif;letter-spacing:-1.029px;color:#939393;">REITER</span>
<span class="t" style="left:30.0px;top:225.25px;font:700 14px/1.2 'Liberation Sans', sans-serif;letter-spacing:-0.133px;color:#1a1a1a;z-index:1;">Staatsbürgerschaft / Citizenship*</span>
<span class="t" style="left:30.0px;top:362.15px;font:700 14px/1.2 'Liberation Sans', sans-serif;letter-spacing:-0.003px;color:#1a1a1a;">EMail*</span>
<span class="t" style="left:30.0px;top:442.85px;font:700 14px/1.2 'Liberation Sans', sans-serif;letter-spacing:0.137px;color:#1a1a1a;">Telefon*</span>
<span class="t" style="left:30.0px;top:533.75px;font:700 14px/1.2 'Liberation Sans', sans-serif;letter-spacing:-0.266px;color:#1a1a1a;">Gastlizenz / Guest Licence *</span>
<span class="t" style="left:1519.0px;top:219.80px;font:400 15px/1.2 'Liberation Sans', sans-serif;letter-spacing:0.357px;color:#1d3a2a;z-index:1;background:linear-gradient(90deg,#235012 0,#235012 45%,#10345e 75%);-webkit-background-clip:text;background-clip:text;color:transparent;">KRÄUTER FÜR</span>
<span class="t" style="left:1491.0px;top:236.50px;font:400 15px/1.2 'Liberation Sans', sans-serif;letter-spacing:0.332px;color:#1d3a2a;z-index:1;background:linear-gradient(90deg,#235012 0,#235012 42%,#10345e 62%);-webkit-background-clip:text;background-clip:text;color:transparent;">PFERDE &amp; HAUSTIERE</span>
<span class="t" style="left:1500.3px;top:383.43px;font:700 58px/1.2 'Liberation Serif', serif;letter-spacing:-2.091px;color:#808080;">Pikeur</span>
<span class="t" style="left:395.0px;top:236.90px;font:400 16.8px/1.2 'Liberation Sans', sans-serif;letter-spacing:-0.429px;color:#353535;z-index:30;">Local Files</span>
<span class="t" style="left:395.0px;top:296.90px;font:400 16.8px/1.2 'Liberation Sans', sans-serif;letter-spacing:0.005px;color:#757575;z-index:30;">Google Drive</span>
<span class="t" style="left:395.0px;top:356.90px;font:400 16.8px/1.2 'Liberation Sans', sans-serif;letter-spacing:0.295px;color:#757575;z-index:30;">Dropbox</span>
<span class="t" style="left:395.0px;top:416.90px;font:400 16.8px/1.2 'Liberation Sans', sans-serif;letter-spacing:-0.111px;color:#757575;z-index:30;">OneDrive</span>
<span class="t" style="left:870.0px;top:451.19px;font:400 41px/1.2 'Liberation Sans', sans-serif;letter-spacing:1.477px;color:#353535;z-index:30;">drag &amp; drop</span>
<span class="t" style="left:909.7px;top:501.19px;font:400 41px/1.2 'Liberation Sans', sans-serif;letter-spacing:0.031px;color:#353535;z-index:30;">any files</span>
<span class="t" style="left:978.0px;top:559.80px;font:400 15px/1.2 'Liberation Sans', sans-serif;letter-spacing:-0.172px;color:#a4a2a1;z-index:30;">or</span>
<span class="t" style="left:905.3px;top:603.84px;font:400 19.5px/1.2 'Liberation Sans', sans-serif;letter-spacing:-0.023px;color:#22344d;z-index:34;">Choose a local file</span>
<span class="t" style="left:787.0px;top:882.47px;font:400 12.5px/1.2 'Liberation Sans', sans-serif;letter-spacing:-0.062px;color:#fafafa;z-index:30;text-shadow:0 1px 1px rgba(0,0,0,.25);">powered by</span>
<span class="t" style="left:872.0px;top:882.47px;font:400 12.5px/1.2 'Liberation Sans', sans-serif;letter-spacing:-0.086px;color:#fafafa;z-index:30;text-shadow:0 1px 1px rgba(0,0,0,.25);">uploadcare</span>
<span class="t" style="left:1340.0px;top:894.86px;font:400 16px/1.2 'Liberation Sans', sans-serif;letter-spacing:-0.022px;color:#8b8b8b;z-index:40;">This website uses cookies to ensure you get the</span>
<span class="t" style="left:1340.0px;top:918.86px;font:400 16px/1.2 'Liberation Sans', sans-serif;letter-spacing:-0.046px;color:#8b8b8b;z-index:40;">best experience on our website.</span>
<span class="t" style="left:1491.0px;top:967.77px;font:700 14.4px/1.2 'Liberation Sans', sans-serif;letter-spacing:-0.123px;color:#8b8b8b;z-index:41;">Got it!</span>
<span class="t" style="left:1540.4px;top:1050.12px;font:700 11.5px/1.2 'Liberation Sans', sans-serif;letter-spacing:-0.674px;color:#ffffff;z-index:60;">ENG</span>
<span class="t" style="left:1672.0px;top:1041.72px;font:400 11.5px/1.2 'Liberation Sans', sans-serif;letter-spacing:0.044px;color:#ffffff;z-index:60;">22:08</span>
<span class="t" style="left:1639.0px;top:1057.92px;font:400 11.5px/1.2 'Liberation Sans', sans-serif;letter-spacing:0.444px;color:#ffffff;z-index:60;">29/07/2025</span>
<span class="t" style="left:157px;top:55.25px;font:400 14px/1.2 'Liberation Sans',sans-serif;letter-spacing:-0.043px;color:#d4d4d4"><span style="color:#fff">portal.oeps.at</span>/oeps/set-online/manage_names_main.php?active_menu=sportler&amp;name_action=searchriderguest&amp;r=1633099251#a_sportlerhead</span>
</body>
</html>
